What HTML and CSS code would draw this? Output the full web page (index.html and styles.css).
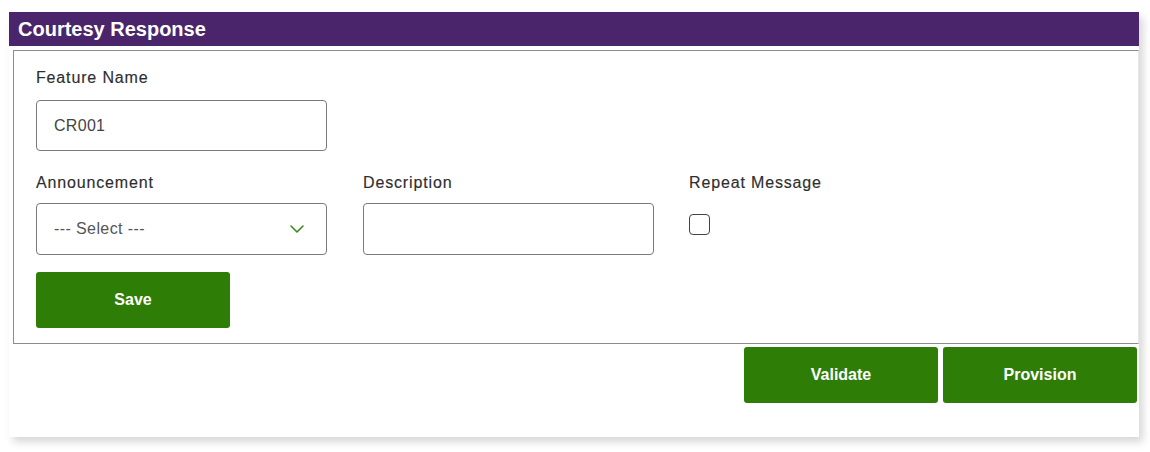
FILE: index.html
```html
<!DOCTYPE html>
<html lang="en">
<head>
<meta charset="utf-8">
<title>Courtesy Response</title>
<link rel="stylesheet" href="styles.css">
</head>
<body>
<div class="card">
  <div class="card-header">Courtesy Response</div>
  <div class="panel">
    <div class="field">
      <label class="label">Feature Name</label>
      <div class="box box-input">CR001</div>
    </div>
    <div class="row">
      <div class="field">
        <label class="label">Announcement</label>
        <div class="box box-select">
          <span class="placeholder">--- Select ---</span>
          <svg class="chevron" width="14" height="8" viewBox="0 0 14 8"><path d="M1 1 L7 7 L13 1" fill="none" stroke="#3c8c1c" stroke-width="1.6" stroke-linecap="round" stroke-linejoin="round"/></svg>
        </div>
      </div>
      <div class="field field-desc">
        <label class="label">Description</label>
        <div class="box box-input"></div>
      </div>
      <div class="field">
        <label class="label">Repeat Message</label>
        <div class="check"></div>
      </div>
    </div>
    <button class="btn btn-save">Save</button>
  </div>
  <div class="actions">
    <button class="btn">Validate</button>
    <button class="btn">Provision</button>
  </div>
</div>
</body>
</html>
```

FILE: styles.css
```css
* { box-sizing: border-box; }
html, body { margin: 0; padding: 0; background: #ffffff; }
body {
  font-family: "Liberation Sans", Arial, sans-serif;
  color: #333333;
  width: 1150px;
  height: 452px;
  overflow: hidden;
}
.card {
  margin: 12px 0 0 9px;
  width: 1130px;
  height: 425px;
  background: #ffffff;
  box-shadow: 4px 5px 8px rgba(0, 0, 0, 0.16);
}
.card-header {
  height: 34px;
  line-height: 34px;
  background: #4a256b;
  color: #ffffff;
  font-size: 20px;
  font-weight: bold;
  padding-left: 9px;
}
.panel {
  margin: 4px 0 0 4px;
  border: 1px solid #8c8c8c;
  border-right-color: #e6e6e6;
  height: 294px;
  padding: 17px 0 0 22px;
}
.row {
  display: grid;
  grid-template-columns: 291px 290px 291px;
  column-gap: 36px;
  margin-top: 22px;
}
.field { display: flex; flex-direction: column; align-items: flex-start; }
.label {
  display: block;
  font-size: 16px;
  line-height: 20px;
  letter-spacing: 0.85px;
  color: #2e2e2e;
  margin-bottom: 12px;
  -webkit-text-stroke: 0.15px #2e2e2e;
}
.row .label { margin-bottom: 10px; }
.box {
  width: 291px;
  height: 51px;
  border: 1px solid #7a7a7a;
  border-radius: 4px;
  padding-left: 17px;
  display: flex;
  align-items: center;
  font-size: 16px;
  letter-spacing: 0.3px;
  color: #444444;
}
.row .box { height: 52px; }
.field-desc .box { width: 291px; }
.box-select { justify-content: space-between; padding-right: 22px; }
.placeholder { color: #555555; letter-spacing: 0.4px; }
.chevron { display: block; }
.check {
  width: 21px;
  height: 21px;
  border: 1.5px solid #444444;
  border-radius: 4px;
  margin-top: 11px;
}
.btn {
  width: 194px;
  height: 56px;
  background: #2e7d06;
  color: #ffffff;
  border: none;
  border-radius: 3px;
  font-family: "Liberation Sans", Arial, sans-serif;
  font-size: 16px;
  font-weight: bold;
  padding: 0;
}
.btn-save { margin-top: 17px; display: block; }
.actions {
  display: flex;
  justify-content: flex-end;
  gap: 5px;
  margin-top: 3px;
  padding-right: 2px;
}
```
